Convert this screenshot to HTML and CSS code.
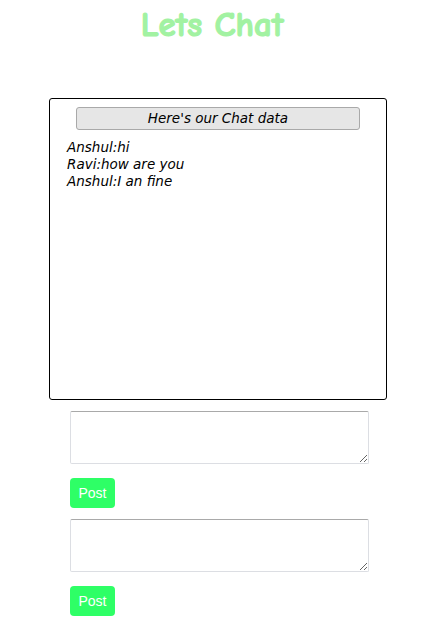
FILE: index.html
```html
<!DOCTYPE html>
<html>
<head>
<meta charset="utf-8">
<title>Lets Chat</title>
<link rel="stylesheet" href="styles.css">
</head>
<body>
<h1 class="title">Lets Chat</h1>
<div class="chat-box">
  <div class="chat-header">Here's our Chat data</div>
  <div class="messages">
    <div class="msg">Anshul:hi</div>
    <div class="msg">Ravi:how are you</div>
    <div class="msg">Anshul:I an fine</div>
  </div>
</div>
<div class="composer">
  <textarea class="input"></textarea>
  <button class="post">Post</button>
  <textarea class="input"></textarea>
  <button class="post">Post</button>
</div>
</body>
</html>
```
FILE: styles.css
```css
html, body {
  margin: 0;
  padding: 0;
  background: #fff;
}
.title {
  margin: 0;
  height: 50px;
  line-height: 50px;
  text-align: center;
  font-family: "Comic Sans MS", "Comic Neue", "DejaVu Sans", sans-serif;
  font-weight: bold;
  font-size: 35px;
  color: #a2f2a2;
  -webkit-text-stroke: 1.2px #a2f2a2;
}
.chat-box {
  box-sizing: border-box;
  margin: 48px 0 0 49px;
  width: 338px;
  height: 302px;
  border: 1px solid #000;
  border-radius: 3px;
  padding: 8px 26px 0;
  font-family: "DejaVu Sans", Verdana, sans-serif;
  font-style: italic;
  font-size: 13.5px;
}
.chat-header {
  box-sizing: border-box;
  height: 23px;
  line-height: 21px;
  background: #e6e6e6;
  border: 1px solid #a9a9a9;
  border-radius: 3px;
  text-align: center;
  color: #000;
}
.messages {
  margin: 9px 0 0 -9px;
}
.msg {
  line-height: 17px;
  color: #000;
}
.composer {
  display: flex;
  flex-direction: column;
  align-items: flex-start;
  padding-left: 70px;
  padding-top: 11px;
}
.input {
  box-sizing: border-box;
  width: 299px;
  height: 53px;
  margin: 0 0 14px;
  border: 1px solid #dcdee3;
  border-top-color: #a9a9a9;
  border-radius: 2px;
  padding: 2px;
  font-family: "Liberation Sans", Arial, sans-serif;
  font-size: 13px;
}
.post {
  box-sizing: border-box;
  width: 45px;
  height: 30px;
  margin: 0 0 11px;
  padding: 0;
  border: none;
  border-radius: 4px;
  background: #2eff66;
  color: #fff;
  font-family: "Liberation Sans", Arial, sans-serif;
  font-size: 14px;
}
```
